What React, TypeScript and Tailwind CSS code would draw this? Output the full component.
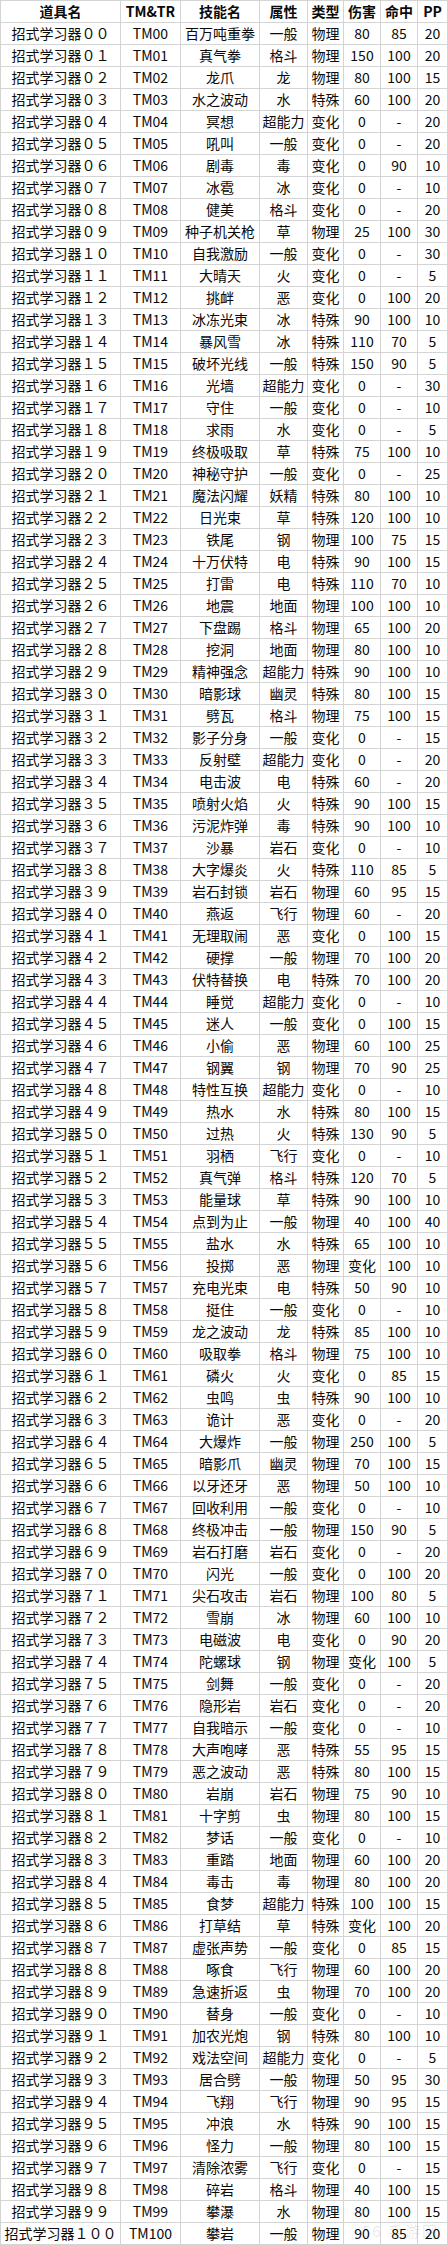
const rows: string[] = [
  "TM00|百万吨重拳|一般|物理|80|85|20",
  "TM01|真气拳|格斗|物理|150|100|20",
  "TM02|龙爪|龙|物理|80|100|15",
  "TM03|水之波动|水|特殊|60|100|20",
  "TM04|冥想|超能力|变化|0|-|20",
  "TM05|吼叫|一般|变化|0|-|20",
  "TM06|剧毒|毒|变化|0|90|10",
  "TM07|冰雹|冰|变化|0|-|10",
  "TM08|健美|格斗|变化|0|-|20",
  "TM09|种子机关枪|草|物理|25|100|30",
  "TM10|自我激励|一般|变化|0|-|30",
  "TM11|大晴天|火|变化|0|-|5",
  "TM12|挑衅|恶|变化|0|100|20",
  "TM13|冰冻光束|冰|特殊|90|100|10",
  "TM14|暴风雪|冰|特殊|110|70|5",
  "TM15|破坏光线|一般|特殊|150|90|5",
  "TM16|光墙|超能力|变化|0|-|30",
  "TM17|守住|一般|变化|0|-|10",
  "TM18|求雨|水|变化|0|-|5",
  "TM19|终极吸取|草|特殊|75|100|10",
  "TM20|神秘守护|一般|变化|0|-|25",
  "TM21|魔法闪耀|妖精|特殊|80|100|10",
  "TM22|日光束|草|特殊|120|100|10",
  "TM23|铁尾|钢|物理|100|75|15",
  "TM24|十万伏特|电|特殊|90|100|15",
  "TM25|打雷|电|特殊|110|70|10",
  "TM26|地震|地面|物理|100|100|10",
  "TM27|下盘踢|格斗|物理|65|100|20",
  "TM28|挖洞|地面|物理|80|100|10",
  "TM29|精神强念|超能力|特殊|90|100|10",
  "TM30|暗影球|幽灵|特殊|80|100|15",
  "TM31|劈瓦|格斗|物理|75|100|15",
  "TM32|影子分身|一般|变化|0|-|15",
  "TM33|反射壁|超能力|变化|0|-|20",
  "TM34|电击波|电|特殊|60|-|20",
  "TM35|喷射火焰|火|特殊|90|100|15",
  "TM36|污泥炸弹|毒|特殊|90|100|10",
  "TM37|沙暴|岩石|变化|0|-|10",
  "TM38|大字爆炎|火|特殊|110|85|5",
  "TM39|岩石封锁|岩石|物理|60|95|15",
  "TM40|燕返|飞行|物理|60|-|20",
  "TM41|无理取闹|恶|变化|0|100|15",
  "TM42|硬撑|一般|物理|70|100|20",
  "TM43|伏特替换|电|特殊|70|100|20",
  "TM44|睡觉|超能力|变化|0|-|10",
  "TM45|迷人|一般|变化|0|100|15",
  "TM46|小偷|恶|物理|60|100|25",
  "TM47|钢翼|钢|物理|70|90|25",
  "TM48|特性互换|超能力|变化|0|-|10",
  "TM49|热水|水|特殊|80|100|15",
  "TM50|过热|火|特殊|130|90|5",
  "TM51|羽栖|飞行|变化|0|-|10",
  "TM52|真气弹|格斗|特殊|120|70|5",
  "TM53|能量球|草|特殊|90|100|10",
  "TM54|点到为止|一般|物理|40|100|40",
  "TM55|盐水|水|特殊|65|100|10",
  "TM56|投掷|恶|物理|变化|100|10",
  "TM57|充电光束|电|特殊|50|90|10",
  "TM58|挺住|一般|变化|0|-|10",
  "TM59|龙之波动|龙|特殊|85|100|10",
  "TM60|吸取拳|格斗|物理|75|100|10",
  "TM61|磷火|火|变化|0|85|15",
  "TM62|虫鸣|虫|特殊|90|100|10",
  "TM63|诡计|恶|变化|0|-|20",
  "TM64|大爆炸|一般|物理|250|100|5",
  "TM65|暗影爪|幽灵|物理|70|100|15",
  "TM66|以牙还牙|恶|物理|50|100|10",
  "TM67|回收利用|一般|变化|0|-|10",
  "TM68|终极冲击|一般|物理|150|90|5",
  "TM69|岩石打磨|岩石|变化|0|-|20",
  "TM70|闪光|一般|变化|0|100|20",
  "TM71|尖石攻击|岩石|物理|100|80|5",
  "TM72|雪崩|冰|物理|60|100|10",
  "TM73|电磁波|电|变化|0|90|20",
  "TM74|陀螺球|钢|物理|变化|100|5",
  "TM75|剑舞|一般|变化|0|-|20",
  "TM76|隐形岩|岩石|变化|0|-|20",
  "TM77|自我暗示|一般|变化|0|-|10",
  "TM78|大声咆哮|恶|特殊|55|95|15",
  "TM79|恶之波动|恶|特殊|80|100|15",
  "TM80|岩崩|岩石|物理|75|90|10",
  "TM81|十字剪|虫|物理|80|100|15",
  "TM82|梦话|一般|变化|0|-|10",
  "TM83|重踏|地面|物理|60|100|20",
  "TM84|毒击|毒|物理|80|100|20",
  "TM85|食梦|超能力|特殊|100|100|15",
  "TM86|打草结|草|特殊|变化|100|20",
  "TM87|虚张声势|一般|变化|0|85|15",
  "TM88|啄食|飞行|物理|60|100|20",
  "TM89|急速折返|虫|物理|70|100|20",
  "TM90|替身|一般|变化|0|-|10",
  "TM91|加农光炮|钢|特殊|80|100|10",
  "TM92|戏法空间|超能力|变化|0|-|5",
  "TM93|居合劈|一般|物理|50|95|30",
  "TM94|飞翔|飞行|物理|90|95|15",
  "TM95|冲浪|水|特殊|90|100|15",
  "TM96|怪力|一般|物理|80|100|15",
  "TM97|清除浓雾|飞行|变化|0|-|15",
  "TM98|碎岩|格斗|物理|40|100|15",
  "TM99|攀瀑|水|物理|80|100|15",
  "TM100|攀岩|一般|物理|90|85|20",
];

// full-width digits for the item name column
const toWide = (n: number) =>
  String(n)
    .padStart(2, "0")
    .split("")
    .map((d) => String.fromCharCode(0xff10 + Number(d)))
    .join("");

const headers = ["道具名", "TM&TR", "技能名", "属性", "类型", "伤害", "命中", "PP"];
const widths = ["w-[120px]", "w-[60px]", "w-[79px]", "w-[48px]", "w-[36px]", "w-[37px]", "w-[37px]", "w-[30px]"];

export default function App() {
  return (
    <div className="relative w-[447px] bg-white font-['Noto_Sans_CJK_SC','Noto_Sans',sans-serif] text-[14px] text-[#0a0a0a]">
      <table className="w-[447px] table-fixed border-collapse">
        <colgroup>
          {widths.map((w, i) => (
            <col key={i} className={w} />
          ))}
        </colgroup>
        <thead>
          <tr className="h-[22px]">
            {headers.map((h) => (
              <th
                key={h}
                className="h-[22px] border border-[#d4d4d4] p-0 text-center font-bold leading-[21px] whitespace-nowrap"
              >
                {h}
              </th>
            ))}
          </tr>
        </thead>
        <tbody>
          {rows.map((r, i) => {
            const cells = ["招式学习器" + toWide(i), ...r.split("|")];
            return (
              <tr key={i} className="h-[22px]">
                {cells.map((c, j) => (
                  <td
                    key={j}
                    className="h-[22px] border border-[#d4d4d4] p-0 text-center leading-[21px] whitespace-nowrap overflow-hidden"
                  >
                    {c}
                  </td>
                ))}
              </tr>
            );
          })}
        </tbody>
      </table>
      {/* watermark */}
      <span className="pointer-events-none absolute bottom-[3px] right-[8px] text-[15px] tracking-[2px] text-[#000]/10">
        56 手游网
      </span>
    </div>
  );
}
